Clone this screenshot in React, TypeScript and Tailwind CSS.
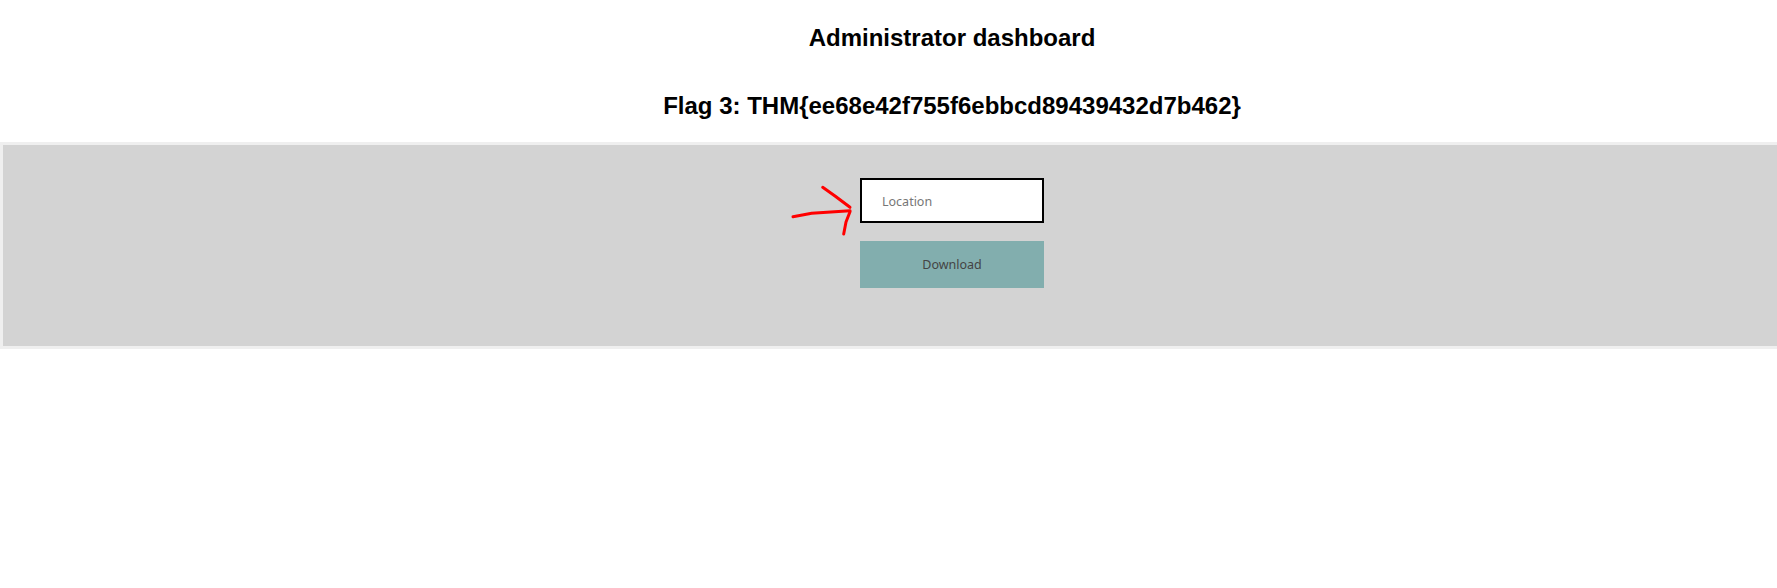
import React from "react";

export default function App() {
  return (
    <div className="w-full h-[588px] overflow-hidden bg-white">
      <div className="w-[1904px] font-['Liberation_Sans',Arial,sans-serif] text-black">
        <h2 className="mt-[24px] text-center text-[24px] leading-[28px] font-bold">
          Administrator dashboard
        </h2>
        <h2 className="mt-[40px] text-center text-[24px] leading-[28px] font-bold">
          Flag 3: THM{"{"}ee68e42f755f6ebbcd89439432d7b462{"}"}
        </h2>
        <div className="relative mt-[22px] h-[207px] border-[3px] border-[#efefef] bg-[#d3d3d3] pt-[33px] flex flex-col items-center">
          <input
            type="text"
            placeholder="Location"
            className="w-[184px] h-[45px] border-2 border-black bg-white pl-[20px] pt-[2px] font-['Noto_Sans',sans-serif] text-[12.5px] text-black placeholder:text-[#767676] outline-none"
          />
          <button
            type="button"
            className="mt-[18px] w-[184px] h-[47px] bg-[#82aeae] pt-[2px] font-['Noto_Sans',sans-serif] text-[12.5px] text-[#444444]"
          >
            Download
          </button>
          <svg
            className="absolute left-[787px] top-[40px]"
            width="70"
            height="55"
            viewBox="0 0 70 55"
            fill="none"
            stroke="#ff0000"
            strokeWidth="3"
            strokeLinecap="round"
            strokeLinejoin="round"
          >
            <path d="M3 31.7 L21.7 28.3 L60 25.7" />
            <path d="M32.7 2.3 L45 11 L60 22.3" />
            <path d="M60 26.7 L56 37 L53.7 49" />
          </svg>
        </div>
      </div>
    </div>
  );
}
